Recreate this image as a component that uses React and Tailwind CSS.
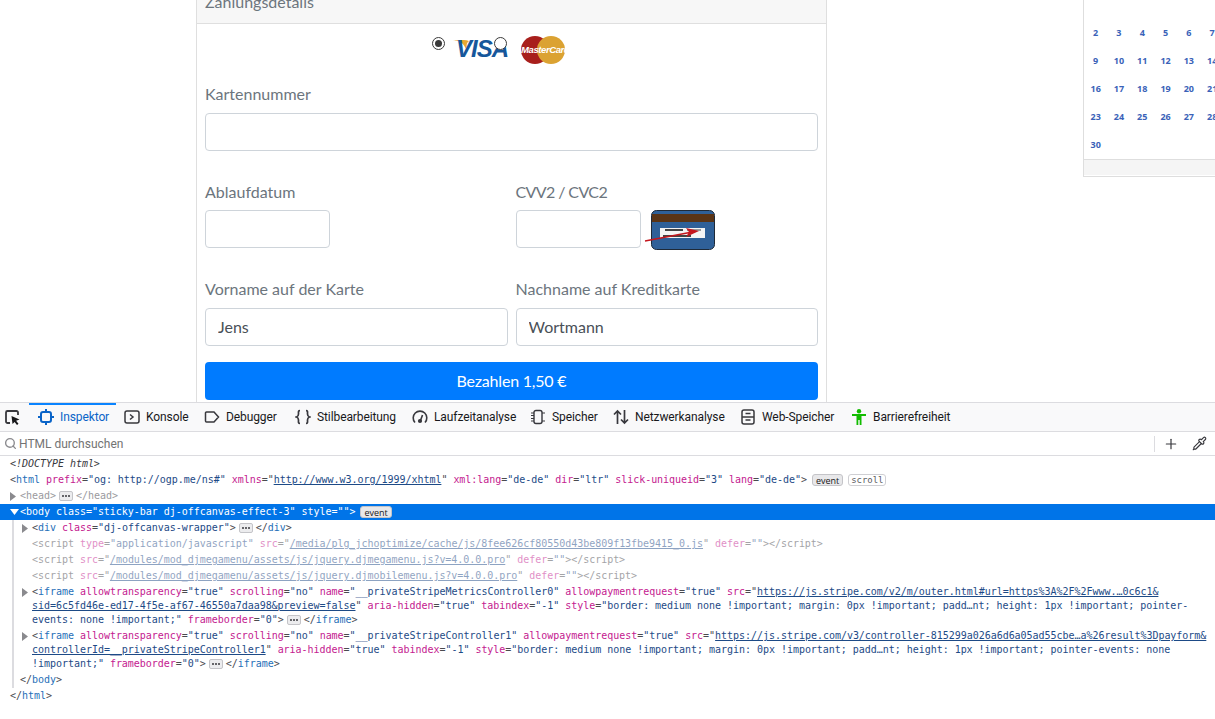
import React from 'react';
import { Search, Plus, Pipette } from 'lucide-react';

const mono = 'font-["DejaVu_Sans_Mono","Liberation_Mono",monospace]';

const days = [2, 3, 4, 5, 6, 7, 8, 9, 10, 11, 12, 13, 14, 15, 16, 17, 18, 19, 20, 21, 22, 23, 24, 25, 26, 27, 28, 29, 30];

// small colour helpers for the markup tree
const N = ({ children }) => <span className="text-[#1f6fb8]">{children}</span>;
const A = ({ children }) => <span className="text-[#c4208f]">{children}</span>;
const V = ({ children }) => <span className="text-[#1d4a86]">{children}</span>;
const L = ({ children }) => <span className="text-[#1d4a86] underline">{children}</span>;
const G = ({ children }) => <span className="text-[#4a4a4f]">{children}</span>;

const Dots = () => (
  <span className="mx-[3px] inline-flex h-[10px] w-[14px] items-center justify-center gap-px rounded-[2px] border border-[#c4c4c8] bg-[#ececee] align-middle">
    <i className="h-[2px] w-[2px] rounded-full bg-[#38383d]" />
    <i className="h-[2px] w-[2px] rounded-full bg-[#38383d]" />
    <i className="h-[2px] w-[2px] rounded-full bg-[#38383d]" />
  </span>
);

const Badge = ({ children, light }) => (
  <span
    className={`ml-[5px] inline-flex h-[12px] items-center rounded-[3px] border px-[2px] text-[9px] leading-none ${
      light ? 'border-[#cfcfd3] bg-white text-[#5c5c5f]' : "border-[#c4c4c8] bg-[#e8e8ea] px-[3px] font-['Open_Sans'] text-[#18181a]"
    }`}
  >
    {children}
  </span>
);

const Arrow = ({ open, white }) => (
  <span className="inline-flex w-[10px] shrink-0 items-center">
    {open ? (
      <svg width="9" height="6" viewBox="0 0 9 6">
        <path d="M0 0h9L4.5 6z" fill={white ? '#fff' : '#777'} />
      </svg>
    ) : (
      <svg width="6" height="9" viewBox="0 0 6 9">
        <path d="M0 0v9l6-4.5z" fill="#8a8a8e" />
      </svg>
    )}
  </span>
);

const tabs = [
  {
    label: 'Inspektor',
    width: 'w-[87px] mr-[8px] pl-[9px] pb-[2px] border-t-2 border-[#0a84ff] text-[#0a64c8]',
    icon: (
      <svg width="16" height="16" viewBox="0 0 16 16" fill="none" stroke="#0a64c8" strokeWidth="2">
        <rect x="3" y="3" width="10" height="10" rx="2" />
        <path d="M8 0v3M8 13v3M0 8h3M13 8h3" />
      </svg>
    ),
  },
  {
    label: 'Konsole',
    width: 'w-[80px]',
    icon: (
      <svg width="16" height="16" viewBox="0 0 16 16" fill="none" stroke="#38383d" strokeWidth="1.5">
        <rect x="1" y="2" width="14" height="12" rx="2" />
        <path d="M6 5.5L9 8l-3 2.5" />
      </svg>
    ),
  },
  {
    label: 'Debugger',
    width: 'w-[91px]',
    icon: (
      <svg width="16" height="16" viewBox="0 0 16 16" fill="none" stroke="#38383d" strokeWidth="1.5">
        <path d="M2.5 3h7.5l4.5 5-4.5 5H2.5a1 1 0 0 1-1-1V4a1 1 0 0 1 1-1z" />
      </svg>
    ),
  },
  {
    label: 'Stilbearbeitung',
    width: 'w-[117px]',
    icon: (
      <svg width="16" height="16" viewBox="0 0 16 16" fill="none" stroke="#38383d" strokeWidth="1.7">
        <path d="M5 1.5C3 1.5 3.5 3.5 3.5 5S3 7.5 1.5 8C3 8.5 3.5 9.500 3.500 11s-.5 3.500 1.500 3.500" />
        <path d="M11 1.500c2 0 1.500 2 1.500 3.500s.5 2.500 2 3c-1.500.5-2 1.500-2 3s.5 3.500-1.500 3.500" />
      </svg>
    ),
  },
  {
    label: 'Laufzeitanalyse',
    width: 'w-[118px]',
    icon: (
      <svg width="16" height="16" viewBox="0 0 16 16" fill="none" stroke="#38383d" strokeWidth="1.6">
        <path d="M3 13.500A6.800 6.800 0 1 1 13 13.500" />
        <path d="M8.500 11.500L10.500 6" />
        <circle cx="8" cy="12" r="1.300" fill="#38383d" />
      </svg>
    ),
  },
  {
    label: 'Speicher',
    width: 'w-[83px]',
    icon: (
      <svg width="16" height="16" viewBox="0 0 16 16" fill="none" stroke="#38383d" strokeWidth="1.4">
        <rect x="4" y="1.500" width="8" height="13" rx="2" />
        <path d="M1 4h3M1 6.500h3M1 9.500h3M1 12h3M12 4h3M12 12h3" strokeWidth="1" />
      </svg>
    ),
  },
  {
    label: 'Netzwerkanalyse',
    width: 'w-[127px]',
    icon: (
      <svg width="16" height="16" viewBox="0 0 16 16" fill="none" stroke="#38383d" strokeWidth="1.7">
        <path d="M4.500 15V2M1 5.500L4.500 2 8 5.500" />
        <path d="M11.500 1v13M8 10.500l3.500 3.500 3.500-3.500" />
      </svg>
    ),
  },
  {
    label: 'Web-Speicher',
    width: 'w-[111px]',
    icon: (
      <svg width="16" height="16" viewBox="0 0 16 16" fill="none" stroke="#38383d" strokeWidth="1.5">
        <rect x="2" y="1" width="12" height="14" rx="2" />
        <path d="M2 8h12M5.500 4.500h5M5.500 11h5" />
      </svg>
    ),
  },
  {
    label: 'Barrierefreiheit',
    width: 'w-auto',
    icon: (
      <svg width="16" height="16" viewBox="0 0 16 16" fill="#12bc00">
        <circle cx="8" cy="2.300" r="2.200" />
        <path d="M1 5h14v2h-4.500v9H8.700V11H7.300v5H5.500V7H1z" />
      </svg>
    ),
  },
];

const App = () => {
  return (
    <div className="h-[719px] w-full overflow-hidden bg-white font-['Lato',sans-serif]">
      {/* page above the devtools */}
      <div className="flex h-[402px] overflow-hidden">
        <div className="ml-[196px] -mt-[20px] h-[460px] w-[631px] shrink-0 border-x border-[#dfdfdf]">
          <div className="flex h-[44px] items-center border-b border-[#dfdfdf] bg-[#f7f7f7] px-2 text-base text-[#6c757d]">
            Zahlungsdetails
          </div>

          <div className="px-2">
            <div className="flex h-[58px] items-start pl-[227px]">
              <span className="mt-[13px] flex h-[13px] w-[13px] shrink-0 items-center justify-center rounded-full border border-[#3a3a3a]">
                <span className="h-[7px] w-[7px] rounded-full bg-[#3a3a3a]" />
              </span>
              <span className="relative ml-[8px] mt-[13px] h-[24px] w-[60px] shrink-0">
                <svg className="absolute left-0 top-[3px]" width="20" height="12" viewBox="0 0 20 12">
                  <path d="M0 1c5-1 10 1 13 8l2 3c-2-6-2-9 1-11C11-.5 5-.5 0 1z" fill="#e8a832" />
                </svg>
                <span className="absolute left-[3px] top-[-1px] font-['Liberation_Sans'] text-[24px] font-bold italic leading-[26px] tracking-[-1px] text-[#16579b]">
                  VISA
                </span>
              </span>
              <span className="relative -ml-[19px] mt-[13px] h-[13px] w-[13px] shrink-0 rounded-full border border-[#3a3a3a] bg-white" />
              <span className="relative ml-[14px] mt-[12px] h-[28px] w-[44px] shrink-0">
                <span className="absolute left-0 top-0 h-[28px] w-[28px] rounded-full bg-[#a81f1c]" />
                <span className="absolute left-[16px] top-0 h-[28px] w-[28px] rounded-full bg-[#dba232]" />
                <span className="absolute left-0 top-[8px] w-[44px] whitespace-nowrap text-center font-['Liberation_Sans'] text-[9.500px] font-bold italic leading-[12px] tracking-[-0.4px] text-white">
                  MasterCard
                </span>
              </span>
            </div>

            <label className="mb-[7px] block text-base leading-6 text-[#6c757d]">Kartennummer</label>
            <input
              readOnly
              className="block h-[38px] w-full rounded border border-[#ced4da] bg-white px-3 text-base text-[#495057]"
            />

            <div className="mt-[29px] grid grid-cols-2 gap-x-2">
              <div>
                <label className="mb-[6px] block text-base leading-6 text-[#6c757d]">Ablaufdatum</label>
                <input readOnly className="block h-[38px] w-[125px] rounded border border-[#ced4da] bg-white" />
              </div>
              <div>
                <label className="mb-[6px] block text-base leading-6 tracking-[-0.6px] text-[#6c757d]">CVV2 / CVC2</label>
                <div className="flex items-start gap-[10px]">
                  <input readOnly className="block h-[38px] w-[125px] rounded border border-[#ced4da] bg-white" />
                  <svg width="64" height="40" viewBox="0 0 64 40" className="shrink-0 overflow-visible">
                    <rect x="0.500" y="0.500" width="63" height="39" rx="5" fill="#2f6098" stroke="#1e2a38" />
                    <rect x="1" y="4" width="62" height="8" fill="#5a3415" />
                    <rect x="9" y="18" width="45" height="10" fill="#f4f4f4" />
                    <path d="M14 20h18M12 26h28" stroke="#444" strokeWidth="2" />
                    <path d="M36 20h14" stroke="#999" strokeWidth="2" />
                    <path d="M-6 31L44 21.500" stroke="#c5161d" strokeWidth="1.600" />
                    <path d="M48 21l-13-3 3 4-3 5z" fill="#c5161d" />
                  </svg>
                </div>
              </div>
            </div>

            <div className="mt-[27px] grid grid-cols-2 gap-x-2">
              <div>
                <label className="mb-[7px] block text-base leading-6 text-[#6c757d]">Vorname auf der Karte</label>
                <input
                  readOnly
                  defaultValue="Jens"
                  className="block h-[38px] w-full rounded border border-[#ced4da] bg-white px-3 pb-[2px] text-base text-[#495057]"
                />
              </div>
              <div>
                <label className="mb-[7px] block text-base leading-6 text-[#6c757d]">Nachname auf Kreditkarte</label>
                <input
                  readOnly
                  defaultValue="Wortmann"
                  className="block h-[38px] w-full rounded border border-[#ced4da] bg-white px-3 pb-[2px] text-base text-[#495057]"
                />
              </div>
            </div>

            <button className="mt-4 block h-[38px] w-full rounded bg-[#007bff] text-base tracking-[-0.2px] text-white">
              Bezahlen 1,50 €
            </button>
          </div>
        </div>

        {/* calendar, cut off at the window edge */}
        <div className="ml-[256px] h-[177px] w-[170px] shrink-0 border-x border-b border-[#dedede]">
          <div className="h-[19px]" />
          <div className="grid h-[140px] grid-cols-[repeat(7,23.3px)] grid-rows-[repeat(5,28px)] font-['Open_Sans'] text-[9px] font-bold text-[#3a62b8]">
            {days.map((d) => (
              <span key={d} className="flex items-center justify-center">
                {d}
              </span>
            ))}
          </div>
          <div className="h-[16px] border-t border-[#dedede] bg-[#f5f5f5]" />
        </div>
      </div>

      {/* devtools */}
      <div className="flex h-[30px] items-stretch border-y border-[#dcdce0] bg-[#f9f9fa] font-['Roboto',sans-serif] text-xs tracking-[-0.1px] text-[#18181a]">
        <div className="flex w-[29px] shrink-0 items-center pl-[4px]">
          <svg width="17" height="17" viewBox="0 0 17 17" fill="none">
            <path d="M14 6V3.500a1.500 1.500 0 0 0-1.500-1.500h-9A1.500 1.500 0 0 0 2 3.500v9A1.500 1.500 0 0 0 3.500 14H6" stroke="#38383d" strokeWidth="1.800" />
            <path d="M7.500 7l8 3.500-3.400 1.200 2.400 3-1.500 1.200-2.400-3L8.500 15z" fill="#18181a" />
          </svg>
        </div>
        {tabs.map((tab) => (
          <div key={tab.label} className={`flex shrink-0 items-center gap-[6px] ${tab.width}`}>
            {tab.icon}
            <span className="whitespace-nowrap">{tab.label}</span>
          </div>
        ))}
      </div>

      <div className="flex h-[24px] items-center border-b border-[#dcdce0] pl-[4px] pr-[8px] font-['Roboto',sans-serif] text-xs text-[#737373]">
        <Search size={13} strokeWidth={2.500} className="text-[#8a8a8e]" />
        <span className="ml-[2px]">HTML durchsuchen</span>
        <span className="ml-auto h-[16px] border-l border-[#dcdce0]" />
        <Plus size={16} strokeWidth={1.800} className="ml-[8px] text-[#38383d]" />
        <Pipette size={15} strokeWidth={1.800} className="ml-[13px] text-[#38383d]" />
      </div>

      <div className={`${mono} whitespace-pre text-[10px] leading-[14px] tracking-[-0.03px] text-[#4a4a4f]`}>
        <div className="flex h-4 items-center pl-[10px] italic text-[#38383d]">{'<!DOCTYPE html>'}</div>
        <div className="flex h-4 items-center pl-[10px]">
          <span>
            <G>{'<'}</G><N>html</N> <A>prefix</A>=<V>"og: http://ogp.me/ns#"</V> <A>xmlns</A>="<L>http://www.w3.org/1999/xhtml</L>" <A>xml:lang</A>=<V>"de-de"</V> <A>dir</A>=<V>"ltr"</V> <A>slick-uniqueid</A>=<V>"3"</V> <A>lang</A>=<V>"de-de"</V><G>{'>'}</G>
          </span>
          <Badge>event</Badge>
          <Badge light>scroll</Badge>
        </div>
        <div className="flex h-4 items-center pl-[10px] text-[#9a9a9e]">
          <Arrow />
          <span>{'<head>'}</span>
          <Dots />
          <span>{'</head>'}</span>
        </div>
        <div className="flex h-4 items-center bg-[#0074e8] pl-[10px] text-white">
          <Arrow open white />
          <span>{'<body class="sticky-bar dj-offcanvas-effect-3" style="">'}</span>
          <Badge>event</Badge>
        </div>

        <div className="ml-[12px] border-l-2 border-[#dcdce0]">
          <div className="flex h-4 items-center pl-[8px]">
            <Arrow />
            <span>
              <G>{'<'}</G><N>div</N> <A>class</A>=<V>"dj-offcanvas-wrapper"</V><G>{'>'}</G>
            </span>
            <Dots />
            <span>
              <G>{'</'}</G><N>div</N><G>{'>'}</G>
            </span>
          </div>
          <div className="flex h-4 items-center pl-[18px] opacity-50">
            <span>
              <G>{'<'}</G>script <A>type</A>=<V>"application/javascript"</V> <A>src</A>="<L>/media/plg_jchoptimize/cache/js/8fee626cf80550d43be809f13fbe9415_0.js</L>" <A>defer</A>=<V>""</V><G>{'></script>'}</G>
            </span>
          </div>
          <div className="flex h-4 items-center pl-[18px] opacity-50">
            <span>
              <G>{'<'}</G>script <A>src</A>="<L>/modules/mod_djmegamenu/assets/js/jquery.djmegamenu.js?v=4.0.0.pro</L>" <A>defer</A>=<V>""</V><G>{'></script>'}</G>
            </span>
          </div>
          <div className="flex h-4 items-center pl-[18px] opacity-50">
            <span>
              <G>{'<'}</G>script <A>src</A>="<L>/modules/mod_djmegamenu/assets/js/jquery.djmobilemenu.js?v=4.0.0.pro</L>" <A>defer</A>=<V>""</V><G>{'></script>'}</G>
            </span>
          </div>

          <div className="py-px">
            <div className="flex h-[14px] items-center pl-[8px]">
              <Arrow />
              <span>
                <G>{'<'}</G><N>iframe</N> <A>allowtransparency</A>=<V>"true"</V> <A>scrolling</A>=<V>"no"</V> <A>name</A>=<V>"__privateStripeMetricsController0"</V> <A>allowpaymentrequest</A>=<V>"true"</V> <A>src</A>="<L>https://js.stripe.com/v2/m/outer.html#url=https%3A%2F%2Fwww.…0c6c1&amp;</L>
              </span>
            </div>
            <div className="flex h-[14px] items-center pl-[18px]">
              <span>
                <L>sid=6c5fd46e-ed17-4f5e-af67-46550a7daa98&amp;preview=false</L>" <A>aria-hidden</A>=<V>"true"</V> <A>tabindex</A>=<V>"-1"</V> <A>style</A>=<V>"border: medium none !important; margin: 0px !important; padd…nt; height: 1px !important; pointer-</V>
              </span>
            </div>
            <div className="flex h-[14px] items-center pl-[18px]">
              <span>
                <V>events: none !important;"</V> <A>frameborder</A>=<V>"0"</V><G>{'>'}</G>
              </span>
              <Dots />
              <span>
                <G>{'</'}</G><N>iframe</N><G>{'>'}</G>
              </span>
            </div>
          </div>

          <div className="py-px">
            <div className="flex h-[14px] items-center pl-[8px]">
              <Arrow />
              <span>
                <G>{'<'}</G><N>iframe</N> <A>allowtransparency</A>=<V>"true"</V> <A>scrolling</A>=<V>"no"</V> <A>name</A>=<V>"__privateStripeController1"</V> <A>allowpaymentrequest</A>=<V>"true"</V> <A>src</A>="<L>https://js.stripe.com/v3/controller-815299a026a6d6a05ad55cbe…a%26result%3Dpayform&amp;</L>
              </span>
            </div>
            <div className="flex h-[14px] items-center pl-[18px]">
              <span>
                <L>controllerId=__privateStripeController1</L>" <A>aria-hidden</A>=<V>"true"</V> <A>tabindex</A>=<V>"-1"</V> <A>style</A>=<V>"border: medium none !important; margin: 0px !important; padd…nt; height: 1px !important; pointer-events: none</V>
              </span>
            </div>
            <div className="flex h-[14px] items-center pl-[18px]">
              <span>
                <V>!important;"</V> <A>frameborder</A>=<V>"0"</V><G>{'>'}</G>
              </span>
              <Dots />
              <span>
                <G>{'</'}</G><N>iframe</N><G>{'>'}</G>
              </span>
            </div>
          </div>

          <div className="flex h-4 items-center pl-[6px]">
            <span>
              <G>{'</'}</G><N>body</N><G>{'>'}</G>
            </span>
          </div>
        </div>
        <div className="flex h-4 items-center pl-[10px]">
          <span>
            <G>{'</'}</G><N>html</N><G>{'>'}</G>
          </span>
        </div>
      </div>
    </div>
  );
};

export default App;
